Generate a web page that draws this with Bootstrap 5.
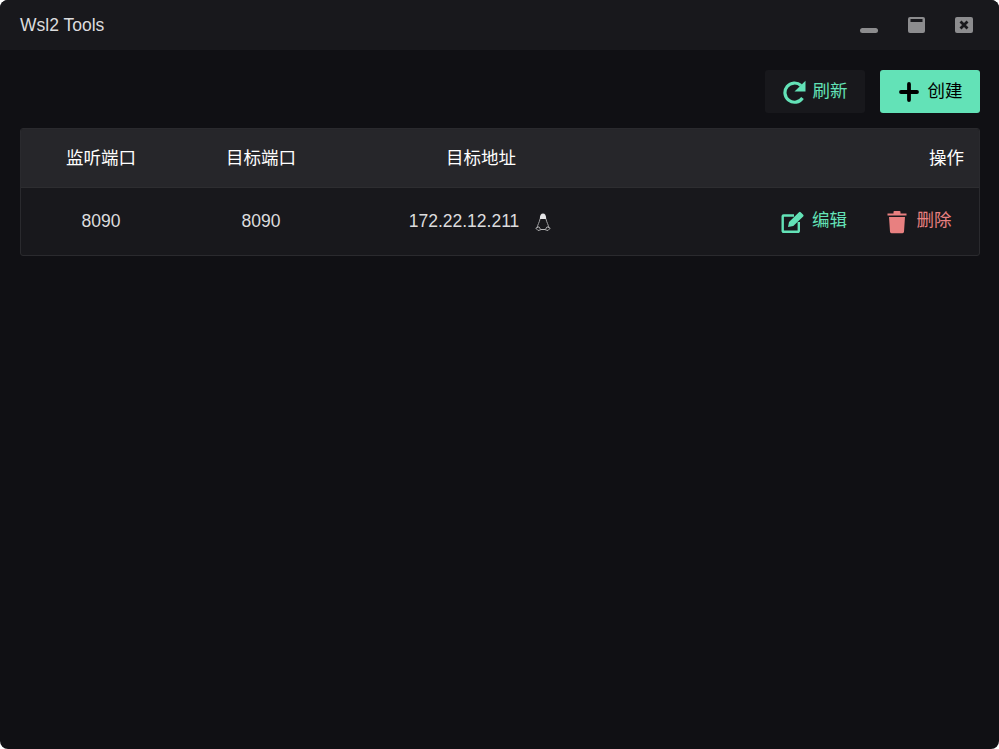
<!DOCTYPE html>
<html lang="zh">
<head>
<meta charset="utf-8">
<title>Wsl2 Tools</title>
<link href="https://cdn.jsdelivr.net/npm/bootstrap@5.3.0/dist/css/bootstrap.min.css" rel="stylesheet">
<style>
html,body{height:100%;background:#fff;}
body{font-family:"Liberation Sans","Noto Sans CJK SC",sans-serif;font-size:17.5px;overflow:hidden;}
.win{height:749px;background:#101014;border-radius:8px;overflow:hidden;color:rgba(255,255,255,.82);}
.titlebar{height:50px;background:#18181c;padding:0 20px;}
.apptitle{font-size:17.5px;color:#dcdcde;}
.winbtns{gap:30px;margin-right:6px;}
.winbtns svg{display:block;overflow:visible;}
.toolbar{padding:20px 19px 0 20px;gap:15px;}
.tbtn{height:43px;border:0;border-radius:3px;font-size:17.5px;display:inline-flex;align-items:center;justify-content:center;gap:6px;padding:0;}
.tbtn-ref{width:100px;background:#18181c;color:#63e2b7;}
.tbtn-new{width:100px;background:#63e2b7;color:#000;gap:9px;padding-left:1px;}
.tablebox{margin:15px 19px 0 20px;border:1px solid #2a2a2e;border-radius:3px;overflow:hidden;background:#18181c;}
.thead-row{height:59px;background:#26262a;border-bottom:1px solid #2d2d30;color:#fff;}
.tbody-row{height:67px;color:#dcdcde;}
.c1,.c2{width:160px;text-align:center;flex:none;}
.c3{width:280px;flex:none;}
.c4{flex:1;}
.addrhead{display:block;text-align:center;}
.addrcell{display:flex;align-items:center;justify-content:center;gap:16px;padding-right:2px;}
.ophead{text-align:right;padding-right:15px;}
.ops{display:flex;justify-content:flex-end;align-items:center;padding-right:27.500px;gap:40px;}
.op{display:inline-flex;align-items:center;gap:7px;}
.op>span{margin-top:-2px;}
.op-del{gap:9.500px;color:#e88080;}
.op-edit{color:#63e2b7;}
</style>
</head>
<body>
<div class="win d-flex flex-column">
  <div class="titlebar d-flex align-items-center justify-content-between">
    <span class="apptitle">Wsl2 Tools</span>
    <div class="winbtns d-flex align-items-center">
      <svg width="18" height="18" viewBox="0 0 18 18"><rect x="1" y="12" width="18" height="5" rx="2.500" fill="#8c8c8e"/></svg>
      <svg width="18" height="18" viewBox="0 0 18 18"><rect x="1" y="1" width="17" height="16" rx="2" fill="#8c8c8e"/><rect x="3.500" y="3" width="12" height="3" fill="#18181c"/></svg>
      <svg width="18" height="18" viewBox="0 0 18 18"><rect y="1" width="18" height="16" rx="2" fill="#8c8c8e"/><path d="M5.500 5.500l7 7m0-7l-7 7" stroke="#18181c" stroke-width="2.800"/></svg>
    </div>
  </div>
  <div class="toolbar d-flex justify-content-end">
    <button class="tbtn tbtn-ref" type="button">
      <svg width="24" height="24" viewBox="0 0 24 24"><path d="M18 5.500A9.600 9.600 0 1 0 19.500 18" fill="none" stroke="#63e2b7" stroke-width="3.200"/><path d="M22.500 .8V11.500H11.500z" fill="#63e2b7"/></svg>
      <span>刷新</span>
    </button>
    <button class="tbtn tbtn-new" type="button">
      <svg width="20" height="20" viewBox="0 0 20 20"><path d="M10 2v16M2 10h16" stroke="#000" stroke-width="3.800" stroke-linecap="round"/></svg>
      <span>创建</span>
    </button>
  </div>
  <div class="tablebox">
    <div class="thead-row d-flex align-items-center">
      <div class="c1">监听端口</div>
      <div class="c2">目标端口</div>
      <div class="c3 addrhead">目标地址</div>
      <div class="c4 ophead">操作</div>
    </div>
    <div class="tbody-row d-flex align-items-center">
      <div class="c1">8090</div>
      <div class="c2">8090</div>
      <div class="c3 addrcell"><span>172.22.12.211</span>
        <svg width="16" height="18" viewBox="0 0 16 18" fill="none"><path d="M4.800 6c0-3.800 1.300-5.500 3.200-5.500s3.200 1.700 3.200 5.500z" fill="#e4e4e6"/><path d="M5 6C4.500 9 2.500 12 2 15M11 6c.5 3 2.500 6 3 9" stroke="#a0a0a2" stroke-width="1"/><path d="M.8 15.200L4 13.800 5.800 16.800 3 17.500zM15.200 15.200L12 13.800 10.200 16.800 13 17.500z" stroke="#a8a8aa" stroke-width="1"/><path d="M5.800 16.500h4.400" stroke="#b8b8ba" stroke-width="1"/></svg>
      </div>
      <div class="c4 ops">
        <span class="op op-edit">
          <svg width="24" height="24" viewBox="0 0 24 24"><path d="M13 5.500H2.500a.8.8 0 0 0-.8.8V21a.8.8 0 0 0 .8.8H17a.8.8 0 0 0 .8-.8V12" fill="none" stroke="#63e2b7" stroke-width="2.400"/><path d="M7 17l1-5L18 2.200a1.200 1.200 0 0 1 1.700 0l2.500 2.500a1.200 1.200 0 0 1 0 1.700L12.300 16z" fill="#63e2b7"/></svg>
          <span>编辑</span>
        </span>
        <span class="op op-del">
          <svg width="20" height="24" viewBox="0 0 20 24"><path d="M.5 3.500h6V1.800A1 1 0 0 1 7.500 1h5a1 1 0 0 1 1 .8v1.700h6V5.500H.5zM2 7h16l-1 14.800a1.500 1.500 0 0 1-1.500 1.400h-11A1.500 1.500 0 0 1 3 21.800z" fill="#e88080"/></svg>
          <span>删除</span>
        </span>
      </div>
    </div>
  </div>
</div>
<script src="https://cdn.jsdelivr.net/npm/bootstrap@5.3.0/dist/js/bootstrap.bundle.min.js"></script>
</body>
</html>
